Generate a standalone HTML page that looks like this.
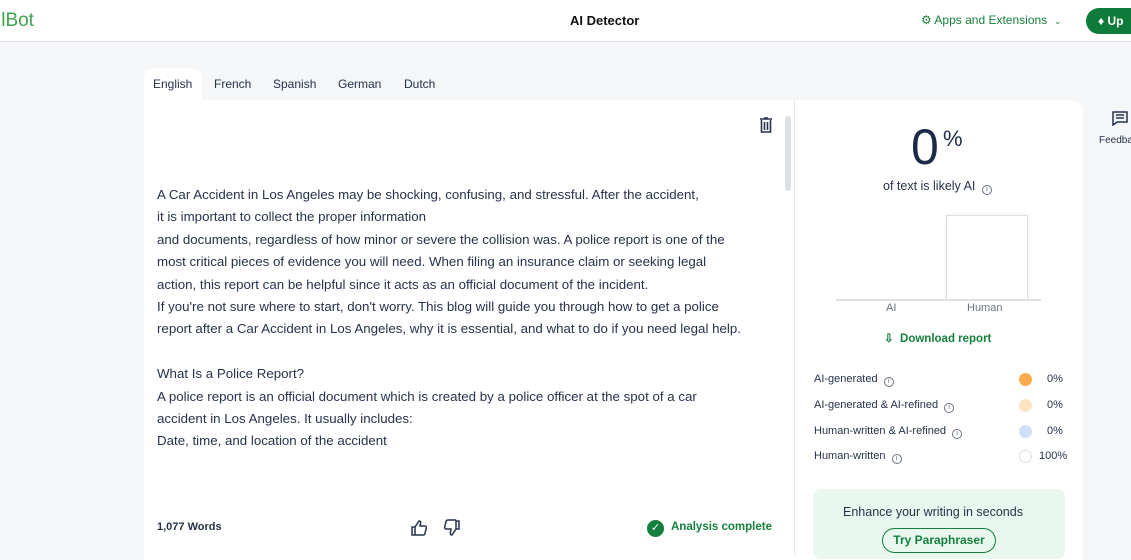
<!DOCTYPE html><html><head><style>
*{margin:0;padding:0;box-sizing:border-box}
body{width:1131px;height:555px;overflow:hidden;background:#f5f6f8;font-family:"Liberation Sans",sans-serif;color:#26324b;position:relative}
.hdr{position:absolute;left:0;top:0;width:1131px;height:42px;background:#fff;border-bottom:1px solid #dfe1e5}
.a{position:absolute;white-space:nowrap}
.tab{position:absolute;top:77px;font-size:12px;color:#26324b}
.card{position:absolute;left:144px;top:100px;width:939px;height:460px;background:#fff;border-radius:0 12px 0 0}
.txt{position:absolute;left:157px;top:184px;font-size:13.3px;line-height:22.4px;color:#26324b}
.row{position:absolute;left:814px;font-size:11px;color:#26324b}
.dot{position:absolute;left:1019px;width:13px;height:13px;border-radius:50%}
.i{display:inline-block;width:10px;height:10px;border:1px solid #6b7280;border-radius:50%;font-size:7px;line-height:8px;text-align:center;color:#6b7280;vertical-align:-1px;margin-left:3px}
</style></head><body>
<div class="hdr"></div>
<div class="a" style="left:-3px;top:10px;font-size:19px;color:#3fa34d">llBot</div>
<div class="a" style="left:570px;top:13px;font-size:13px;font-weight:bold;color:#111">AI Detector</div>
<div class="a" style="left:921px;top:13px;font-size:12px;color:#16803c">⚙ Apps and Extensions &nbsp;<span style="font-size:9px">⌄</span></div>
<div class="a" style="left:1086px;top:8px;width:60px;height:26px;border-radius:13px;background:#0f7b3a;color:#fff;font-size:12px;font-weight:bold;padding:6px 0 0 12px">♦ Up</div>
<div class="a" style="left:144px;top:68px;width:58px;height:36px;background:#fff;border-radius:10px 10px 0 0"></div>
<div class="tab" style="left:153px">English</div><div class="tab" style="left:214px">French</div><div class="tab" style="left:273px">Spanish</div><div class="tab" style="left:338px">German</div><div class="tab" style="left:404px">Dutch</div>
<div class="card"></div>
<div class="a" style="left:794px;top:100px;width:1px;height:455px;background:#e5e7eb"></div>
<div class="a" style="left:785px;top:116px;width:6px;height:75px;border-radius:3px;background:#dcdfe3"></div>
<svg class="a" style="left:759px;top:117px" width="14" height="16" viewBox="0 0 14 16"><path d="M1 2h12M5 1h4M2.5 3v12h9V3M5.5 5v8M8.5 5v8" fill="none" stroke="#26324b" stroke-width="1.6"/></svg>
<div class="txt">A Car Accident in Los Angeles may be shocking, confusing, and stressful. After the accident,<br>it is important to collect the proper information<br>and documents, regardless of how minor or severe the collision was. A police report is one of the<br>most critical pieces of evidence you will need. When filing an insurance claim or seeking legal<br>action, this report can be helpful since it acts as an official document of the incident.<br>If you're not sure where to start, don't worry. This blog will guide you through how to get a police<br>report after a Car Accident in Los Angeles, why it is essential, and what to do if you need legal help.<br><br>What Is a Police Report?<br>A police report is an official document which is created by a police officer at the spot of a car<br>accident in Los Angeles. It usually includes:<br>Date, time, and location of the accident</div>
<div class="a" style="left:157px;top:521px;font-size:11px;font-weight:bold;color:#26324b">1,077 Words</div>
<svg class="a" style="left:411px;top:519px" width="50" height="18" viewBox="0 0 50 18"><path d="M1 8h3v8H1zM4 8l4-6c1.5 0 2 1 1.5 3L9 7h5c1 0 1.5 1 1.3 2l-1.5 6c-.3 1-1 1-2 1H4" fill="none" stroke="#26324b" stroke-width="1.5"/><path d="M48 10h-3V2h3zM45 10l-4 6c-1.5 0-2-1-1.5-3l.5-3h-5c-1 0-1.5-1-1.3-2l1.5-6c.3-1 1-1 2-1h8" fill="none" stroke="#26324b" stroke-width="1.5"/></svg>
<div class="a" style="left:647px;top:520px;width:17px;height:17px;border-radius:50%;background:#15803d;color:#fff;font-size:11px;text-align:center;line-height:17px">✓</div>
<div class="a" style="left:671px;top:521px;font-size:11.5px;font-weight:bold;color:#15803d">Analysis complete</div>
<div class="a" style="left:911px;top:122px;font-size:50px;color:#1c2a4a;line-height:1">0</div>
<div class="a" style="left:943px;top:126px;font-size:22px;color:#1c2a4a">%</div>
<div class="a" style="left:883px;top:179px;font-size:12.5px">of text is likely AI <span class="i">i</span></div>
<div class="a" style="left:946px;top:215px;width:82px;height:85px;background:#fff;border:1px solid #dcdfe3;border-bottom:none;box-shadow:0 0 4px rgba(0,0,0,.08)"></div>
<div class="a" style="left:836px;top:299px;width:205px;height:2px;background:#dde1e6"></div>
<div class="a" style="left:886px;top:302px;font-size:11px;color:#6b7280">AI</div>
<div class="a" style="left:967px;top:302px;font-size:11px;color:#6b7280">Human</div>
<div class="a" style="left:884px;top:331px;font-size:11.5px;font-weight:bold;color:#15803d">⇩ &nbsp;Download report</div>
<div class="row" style="top:373px">AI-generated <span class="i">i</span></div><div class="dot" style="top:373px;background:#fbab4e"></div><div class="a" style="top:373px;left:1047px;font-size:11px">0%</div>
<div class="row" style="top:399px">AI-generated &amp; AI-refined <span class="i">i</span></div><div class="dot" style="top:399px;background:#fde3c4"></div><div class="a" style="top:399px;left:1047px;font-size:11px">0%</div>
<div class="row" style="top:425px">Human-written &amp; AI-refined <span class="i">i</span></div><div class="dot" style="top:425px;background:#cfe0fb"></div><div class="a" style="top:425px;left:1047px;font-size:11px">0%</div>
<div class="row" style="top:450px">Human-written <span class="i">i</span></div><div class="dot" style="top:450px;background:#fff;border:1px solid #dcdfe3"></div><div class="a" style="top:450px;left:1039px;font-size:11px">100%</div>
<div class="a" style="left:813px;top:489px;width:252px;height:70px;background:#e8f8ef;border-radius:8px"></div>
<div class="a" style="left:843px;top:505px;font-size:12.5px;color:#26324b">Enhance your writing in seconds</div>
<div class="a" style="left:882px;top:528px;width:114px;height:25px;border:1.5px solid #15803d;border-radius:13px;font-size:12px;font-weight:bold;color:#15803d;text-align:center;line-height:22px">Try Paraphraser</div>
<svg class="a" style="left:1112px;top:111px" width="16" height="15" viewBox="0 0 16 15"><path d="M1 1h14v10H5l-4 3z M4 4h8M4 7h8" fill="none" stroke="#26324b" stroke-width="1.5"/></svg>
<div class="a" style="left:1099px;top:135px;font-size:10px">Feedback</div>
</body></html>
